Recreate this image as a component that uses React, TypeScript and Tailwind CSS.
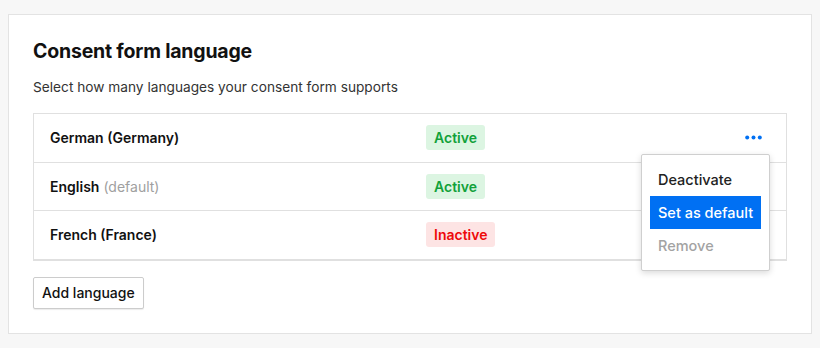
export default function App() {
  const languages = [
    { id: 1, name: 'German (Germany)', isDefault: false, active: true },
    { id: 2, name: 'English', isDefault: true, active: true },
    { id: 3, name: 'French (France)', isDefault: false, active: false },
  ]

  return (
    <div className="min-h-screen bg-[#f7f7f7] pt-[14px] px-[8px] font-['Inter',sans-serif] text-[#111]">
      <div className="bg-white border border-[#e3e3e3] px-[24px] pt-[22px] pb-[24px]">
        <h2 className="text-[19.5px] leading-[28px] font-bold tracking-[-0.2px]">Consent form language</h2>
        <p className="mt-[12px] text-[13.7px] leading-[20px] text-[#333]">
          Select how many languages your consent form supports
        </p>

        {/* Languages table */}
        <div className="relative mt-[16px] border border-[#e0e0e0] divide-y divide-[#e0e0e0]">
          {languages.map((lang) => (
            <div key={lang.id} className="flex items-center h-[48.5px] pl-[16px] pr-[24px]">
              <div className="w-[376px] text-[14px] font-semibold">
                {lang.name}
                {lang.isDefault && <span className="ml-[4px] font-normal text-[#a0a0a0]">(default)</span>}
              </div>
              <div className="flex-1">
                {lang.active ? (
                  <span className="inline-flex items-center h-[25px] px-[8px] rounded-[3px] bg-[#dcf5e2] text-[#12a13a] text-[14px] font-semibold">
                    Active
                  </span>
                ) : (
                  <span className="inline-flex items-center h-[25px] px-[8px] rounded-[3px] bg-[#fde4e4] text-[#ee0a0a] text-[14px] font-semibold">
                    Inactive
                  </span>
                )}
              </div>
              {lang.id === 1 && (
                <button className="text-[#0070f3]">
                  <svg width="17" height="5" viewBox="0 0 17 5" fill="currentColor">
                    <circle cx="2.2" cy="2.5" r="2" />
                    <circle cx="8.5" cy="2.5" r="2" />
                    <circle cx="14.8" cy="2.5" r="2" />
                  </svg>
                </button>
              )}
            </div>
          ))}

          {/* Actions menu */}
          <div className="absolute top-[40px] right-[16px] w-[129px] bg-white border border-[#cfcfcf] rounded-[2px] shadow-[0_2px_6px_rgba(0,0,0,0.15)] p-[8px] text-[14.5px] font-medium whitespace-nowrap">
            <div className="h-[33px] flex items-center px-[8px] text-[#222]">Deactivate</div>
            <div className="h-[33px] flex items-center px-[8px] bg-[#0070f3] text-white">Set as default</div>
            <div className="h-[33px] flex items-center px-[8px] text-[#a3a3a3]">Remove</div>
          </div>
        </div>

        <button className="mt-[16px] h-[32px] px-[8px] border border-[#cccccc] rounded-[2px] bg-white shadow-[0_1px_1px_rgba(0,0,0,0.08)] text-[14px] font-medium text-[#111]">
          Add language
        </button>
      </div>
    </div>
  )
}
